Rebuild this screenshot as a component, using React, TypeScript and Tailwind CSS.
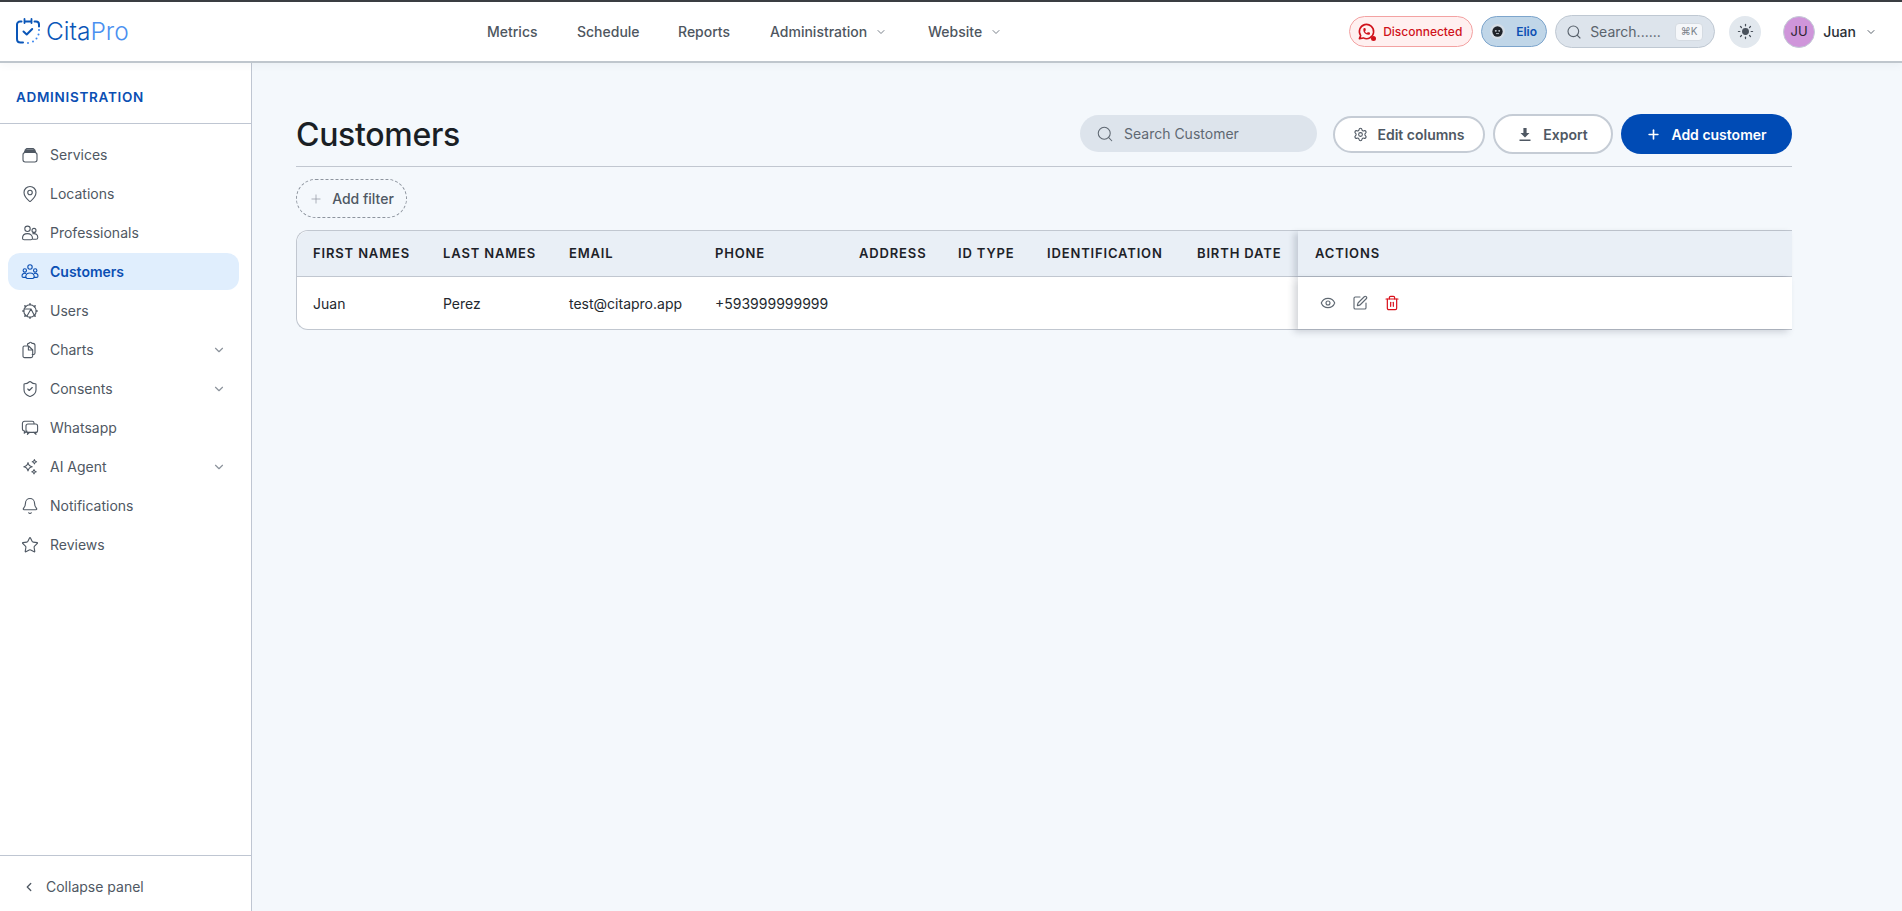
import { Bell, ChevronDown, ChevronLeft, Eye, MapPin, Plus, Search, Settings, ShieldCheck, SquarePen, Star, Sun, Trash2 } from "lucide-react";
import { TbBrandWhatsapp } from "react-icons/tb";
import type { ReactNode } from "react";

function Ico({ children }: { children: ReactNode }) {
  return (
    <svg width="18" height="18" viewBox="0 0 18 18" fill="none" stroke="currentColor" strokeWidth="1.1" strokeLinecap="round" strokeLinejoin="round" className="shrink-0">
      {children}
    </svg>
  );
}

const ServicesIcon = () => (
  <Ico>
    <rect x="2" y="6.500" width="14" height="9.500" rx="2.200" />
    <path d="M3.500 6.500 5 3.200C5.200 2.700 5.600 2.500 6 2.500h6c.4 0 .8.2 1 .7l1.500 3.300" />
    <path d="M3.800 5.200h10.400M4.400 4h9.200" strokeWidth="1.600" />
  </Ico>
);

const ProfessionalsIcon = () => (
  <Ico>
    <circle cx="6.500" cy="4.800" r="2.700" />
    <circle cx="13" cy="6.400" r="2" />
    <path d="M1.500 14.200c0-2.800 2.200-4.600 5-4.600s5 1.800 5 4.600c0 1-.8 1.600-1.600 1.600H3.200c-.9 0-1.700-.6-1.700-1.600Z" />
    <path d="M11.800 9.800c2.600-.6 5 .8 5 3.600 0 1.200-.8 1.900-1.800 1.900h-3" />
  </Ico>
);

const CustomersIcon = () => (
  <Ico>
    <circle cx="9" cy="4" r="2.200" />
    <circle cx="3.800" cy="7.400" r="1.700" />
    <circle cx="14.200" cy="7.400" r="1.700" />
    <path d="M4.800 13.800c0-2.300 1.800-3.800 4.200-3.800s4.200 1.500 4.200 3.800c0 1-.7 1.700-1.600 1.700H6.400c-.9 0-1.600-.7-1.600-1.700Z" />
    <path d="M4.600 10.400c-1.900-.4-3.600.6-3.600 2.600 0 .9.7 1.400 1.500 1.400h2.300M13.400 10.400c1.900-.4 3.600.6 3.600 2.600 0 .9-.7 1.400-1.500 1.400h-2.300" />
  </Ico>
);

const UsersIcon = () => (
  <Ico>
    <circle cx="9" cy="9" r="6.200" />
    <path d="M9 1.800v1M9 15.200v1M1.800 9h1M15.200 9h1M3.900 3.900l.7.7M13.400 13.400l.7.7M14.100 3.900l-.7.7M4.600 13.400l-.7.7" strokeWidth="1.500" />
    <path d="M3 7h7l3.400 6.400M10 7l-4 7" />
  </Ico>
);

const ChartsIcon = () => (
  <Ico>
    <path d="M6.500 4.200V3.400c0-.6.5-1 1-1h.6c.2-.8.8-1.100 1.400-1.100s1.200.3 1.400 1.100h1c1.200 0 2.100.9 2.100 2.100v7.400c0 1-.7 1.600-1.600 1.600h-1.200" />
    <path d="M2 6.400c0-.8.6-1.400 1.400-1.400h4.200L11.700 9v6c0 1-.7 1.600-1.600 1.600H3.600C2.700 16.600 2 16 2 15Z" />
    <path d="M7.400 5.200V9h4.100" />
  </Ico>
);

const WhatsappIcon = () => (
  <Ico>
    <path d="M13 4.600V4c0-1-.8-1.800-1.800-1.800H3.600C2.400 2.200 1.400 3.200 1.400 4.400v5.400c0 1.200 1 2.200 2.200 2.200l-.4 2.200 2.800-2.200" />
    <rect x="5" y="5" width="11.600" height="8.400" rx="2" />
    <path d="m7 13.400-.6 2 2.200-2M14.400 13.400l.6 2-2.200-2" />
  </Ico>
);

const AgentIcon = () => (
  <Ico>
    <path d="M7 4.600c.5 2.600 1.500 3.600 4.200 4.200-2.700.6-3.700 1.600-4.200 4.200-.5-2.600-1.500-3.600-4.200-4.200C5.500 8.200 6.500 7.200 7 4.600Z" />
    <path d="M13.400 1.600c.3 1.400.8 1.900 2.200 2.200-1.400.3-1.900.8-2.200 2.200-.3-1.400-.8-1.900-2.200-2.200 1.400-.3 1.900-.8 2.200-2.200Z" />
    <path d="M13 11.600c.3 1.400.8 1.900 2.200 2.200-1.400.3-1.900.8-2.200 2.200-.3-1.400-.8-1.900-2.200-2.200 1.400-.3 1.900-.8 2.200-2.200Z" />
  </Ico>
);

const sideItems: { label: string; icon: ReactNode; caret?: boolean; active?: boolean }[] = [
  { label: "Services", icon: <ServicesIcon /> },
  { label: "Locations", icon: <MapPin size={18} strokeWidth={1.5} /> },
  { label: "Professionals", icon: <ProfessionalsIcon /> },
  { label: "Customers", icon: <CustomersIcon />, active: true },
  { label: "Users", icon: <UsersIcon /> },
  { label: "Charts", icon: <ChartsIcon />, caret: true },
  { label: "Consents", icon: <ShieldCheck size={18} strokeWidth={1.5} />, caret: true },
  { label: "Whatsapp", icon: <WhatsappIcon /> },
  { label: "AI Agent", icon: <AgentIcon />, caret: true },
  { label: "Notifications", icon: <Bell size={18} strokeWidth={1.5} /> },
  { label: "Reviews", icon: <Star size={18} strokeWidth={1.5} /> },
];

const columns = ["First names", "Last names", "Email", "Phone", "Address", "ID type", "Identification", "Birth date"];
const row = ["Juan", "Perez", "test@citapro.app", "+593999999999", "", "", "", ""];

function Logo() {
  return (
    <div className="flex items-center gap-[6px]">
      <svg width="24" height="27" viewBox="0 0 24 27" fill="none" stroke="#0a56b8" strokeWidth="2" strokeLinecap="round">
        <path d="M5.500 3.500H4C2.400 3.500 1 4.900 1 6.500v14.500c0 2 1.500 3.500 3.500 3.500H7" />
        <path d="M9 3.500h6M18.500 3.500H20c1.700 0 3 1.400 3 3v2" />
        <path d="M8.500 1v4M15.500 1v4" strokeWidth="1.800" />
        <path d="m7.500 13.500 3.200 3 5.500-5.500" strokeWidth="2" strokeLinejoin="round" />
        <path d="M23 12v.1M22.500 16.500v.1M20.500 20.500v.1M17 23.500v.1M12 25v.1" stroke="#3b86ee" strokeWidth="2" />
      </svg>
      <span className="text-[24.500px] leading-none font-light text-[#0a56b8]">
        Cita<span className="text-[#4a90f0]">Pro</span>
      </span>
    </div>
  );
}

function TopBar() {
  return (
    <header className="relative z-10 flex h-[61px] shrink-0 items-center border-b-2 border-[#bfc6cd] bg-white shadow-[0_2px_8px_rgba(60,80,110,0.06)]">
      <div className="w-[487px] shrink-0 pl-4">
        <Logo />
      </div>
      <nav className="flex flex-1 items-center text-[14px] font-[450] text-[#4e5660]">
        <a className="w-[90px]">Metrics</a>
        <a className="w-[101px]">Schedule</a>
        <a className="w-[92px]">Reports</a>
        <a className="flex w-[158px] items-center gap-[8px]">
          Administration <ChevronDown size={12} className="text-[#79818a]" />
        </a>
        <a className="flex items-center gap-[8px]">
          Website <ChevronDown size={12} className="text-[#79818a]" />
        </a>
      </nav>
      <div className="flex items-center pr-[25px]">
        <div className="flex h-[31px] w-[124px] items-center gap-[7px] rounded-full border border-[#f3a2a2] bg-[#fff0f0] pl-[7px] text-[12px] font-medium text-[#d0121b]">
          <span className="relative shrink-0">
            <TbBrandWhatsapp size={19} />
            <span className="absolute bottom-0 right-0 h-[5px] w-[5px] rounded-full bg-[#d0121b]" />
          </span>
          Disconnected
        </div>
        <div className="ml-[8px] flex h-[31px] w-[66px] items-center gap-[11px] rounded-full border border-[#7da5cc] bg-[#c0d6e8] pl-[8px] text-[12px] font-semibold text-[#0b4fb3]">
          <svg width="15" height="15" viewBox="0 0 14 14" className="shrink-0">
            <circle cx="7" cy="7" r="7" fill="#d4dde6" />
            <circle cx="7" cy="7" r="4.800" fill="#1f2329" />
            <circle cx="5.400" cy="6.400" r="0.900" fill="#c5ccd4" />
            <circle cx="8.600" cy="6.400" r="0.900" fill="#c5ccd4" />
            <rect x="5.600" y="8.600" width="2.800" height="0.800" fill="#c5ccd4" />
          </svg>
          Elio
        </div>
        <div className="ml-[8px] flex h-[33px] w-[160px] items-center rounded-full border border-[#bfc8d2] bg-[#dde4ec] pl-[10px] pr-[11px] text-[14px] text-[#5a636d]">
          <Search size={16} strokeWidth={1.7} className="shrink-0" />
          <span className="ml-[8px] flex-1">Search......</span>
          <span className="flex h-[18px] w-[28px] items-center justify-center rounded-[4px] border border-[#d5dbe2] bg-[#f5f7fa] text-[10px] text-[#79818a]">⌘K</span>
        </div>
        <div className="ml-[14px] flex h-[32px] w-[32px] items-center justify-center rounded-full bg-[#e2e8ee] text-[#4a525c]">
          <Sun size={17} fill="currentColor" strokeWidth={1.7} />
        </div>
        <div className="ml-[22px] flex h-[32px] w-[32px] items-center justify-center rounded-full border border-[#c4ccd6] bg-[#cf95da] text-[13px] text-[#2c2431]">JU</div>
        <span className="ml-[8px] text-[14px] font-medium text-[#2a2f35]">Juan</span>
        <ChevronDown size={12} className="ml-[9px] text-[#5a636d]" />
      </div>
    </header>
  );
}

function Sidebar() {
  return (
    <aside className="flex w-[252px] shrink-0 flex-col border-r border-[#bfc6d2] bg-white">
      <div className="flex h-[61px] shrink-0 items-center border-b border-[#bfc6d2] pl-4 pt-[8px] text-[13.500px] font-semibold tracking-[0.7px] text-[#0b4fb3]">
        ADMINISTRATION
      </div>
      <ul className="flex flex-1 flex-col gap-[2px] pl-2 pr-3 pt-3">
        {sideItems.map(item => (
          <li
            key={item.label}
            className={`flex h-[37px] items-center gap-[11px] rounded-[12px] pl-[13px] pr-[13px] text-[14px] ${
              item.active ? "bg-[#e0eefd] font-semibold text-[#0b4fb3]" : "font-normal text-[#4f5863]"
            }`}
          >
            {item.icon}
            <span className="flex-1">{item.label}</span>
            {item.caret && <ChevronDown size={14} className="text-[#8c939c]" />}
          </li>
        ))}
      </ul>
      <div className="flex h-[56px] shrink-0 items-center gap-[10px] border-t border-[#bfc6d2] pl-[22px] pt-[6px] text-[14px] text-[#4f5863]">
        <ChevronLeft size={14} strokeWidth={2.2} />
        Collapse panel
      </div>
    </aside>
  );
}

function Toolbar() {
  return (
    <div className="flex h-[53px] items-start justify-between border-b border-[#c1c7d0]">
      <h1 className="flex h-[41px] items-center text-[32px] font-[550] tracking-[-0.3px] text-[#1a1f25]">Customers</h1>
      <div className="flex h-[40px] items-start">
        <div className="mt-[1px] flex h-[37px] w-[237px] items-center gap-[10px] rounded-full bg-[#dde4ec] pl-[16px] text-[14px] text-[#5f6872]">
          <Search size={18} strokeWidth={1.4} />
          Search Customer
        </div>
        <button className="ml-[16px] mt-[2px] flex h-[37px] w-[152px] items-center justify-center gap-[9px] rounded-full border-2 border-[#c5ccd5] bg-white text-[14px] font-semibold text-[#4f5863]">
          <Settings size={15} strokeWidth={1.7} />
          Edit columns
        </button>
        <button className="ml-[8px] flex h-[40px] w-[120px] items-center justify-center gap-[11px] rounded-full border-2 border-[#c5ccd5] bg-white text-[14px] font-semibold text-[#4f5863]">
          <svg width="14" height="15" viewBox="0 0 14 15" fill="currentColor">
            <path d="M5.400 1h3.200v5h2.900L7 10.500 2.500 6h2.900ZM1.500 12.500h11V14h-11Z" />
          </svg>
          Export
        </button>
        <button className="ml-[8px] flex h-[40px] w-[171px] items-center justify-center gap-[10px] rounded-full bg-[#004bb5] text-[14px] font-semibold text-white">
          <Plus size={15} strokeWidth={2.6} />
          Add customer
        </button>
      </div>
    </div>
  );
}

function CustomersTable() {
  return (
    <div className="mt-[12px] rounded-l-xl border border-r-0 border-[#c1c7d0] bg-white">
      <div className="grid h-[46px] grid-cols-[130px_126px_146px_144px_99px_89px_150px_117px_1fr] items-center rounded-tl-xl border-b border-[#c1c7d0] bg-[#e9eff6] text-[13px] font-semibold uppercase tracking-[0.85px] text-[#1d2228]">
        {columns.map(c => (
          <div key={c} className="whitespace-nowrap pl-4">{c}</div>
        ))}
        <div className="flex h-full items-center pl-[17px] shadow-[-4px_2px_6px_rgba(40,50,70,0.18)]">Actions</div>
      </div>
      <div className="grid h-[52px] grid-cols-[130px_126px_146px_144px_99px_89px_150px_117px_1fr] items-center text-[14px] text-[#23282e]">
        {row.map((c, i) => (
          <div key={i} className="whitespace-nowrap pl-4">{c}</div>
        ))}
        <div className="flex h-full items-center gap-[16px] bg-white pl-[22px] text-[#5f6872] shadow-[-4px_3px_7px_rgba(40,50,70,0.2)]">
          <Eye size={16} strokeWidth={1.7} />
          <SquarePen size={16} strokeWidth={1.7} />
          <Trash2 size={16} strokeWidth={1.8} className="text-[#d9101a]" />
        </div>
      </div>
    </div>
  );
}

export default function App() {
  return (
    <div className="flex h-screen flex-col overflow-hidden border-t-2 border-[#3a3d42] bg-[#f4f8fc] font-['Inter',sans-serif]">
      <TopBar />
      <div className="flex min-h-0 flex-1">
        <Sidebar />
        <main className="flex-1 pl-[44px] pr-[110px] pt-[51px]">
          <Toolbar />
          <button className="mt-[12px] flex h-[39px] w-[111px] items-center justify-center gap-[9px] rounded-full border border-dashed border-[#8d949e] text-[14px] font-medium text-[#4f5863]">
            <Plus size={14} strokeWidth={1.2} className="text-[#8d949e]" />
            Add filter
          </button>
          <CustomersTable />
        </main>
      </div>
    </div>
  );
}
